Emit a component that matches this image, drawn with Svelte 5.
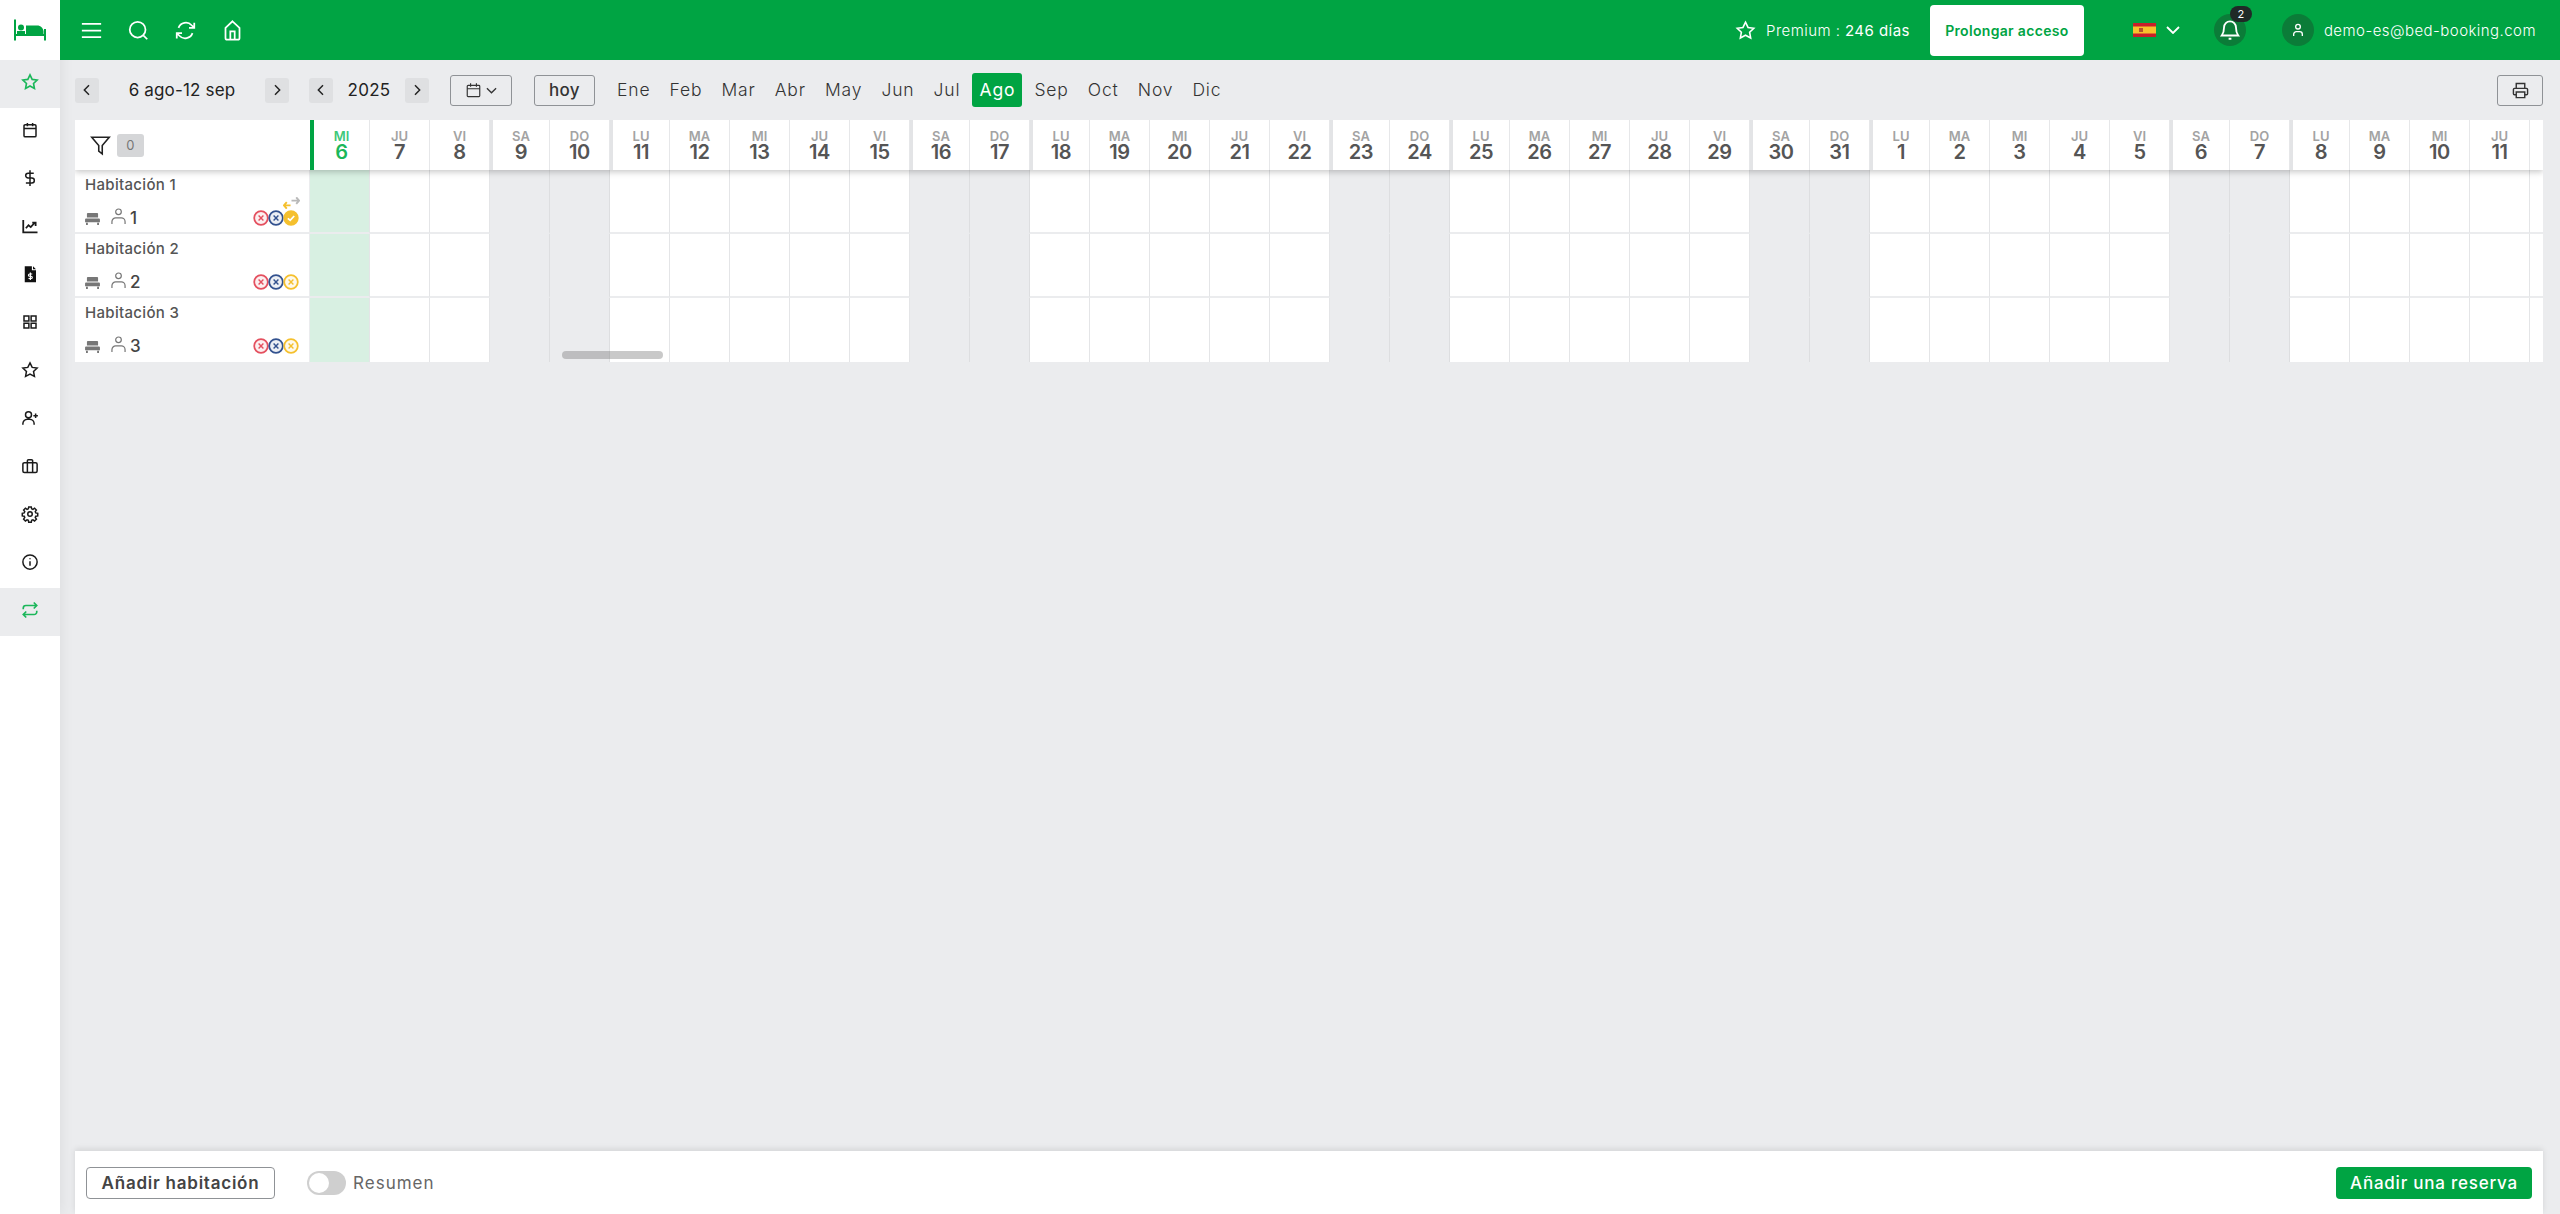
<script>
    const navIcons = [
        { d: "M12 2.5l2.9 6 6.6.9-4.8 4.6 1.2 6.5-5.900-3.100-5.900 3.100 1.200-6.500L2.500 9.400l6.600-.9z", active: true },
        { d: "M5.500 5h13a1.500 1.500 0 0 1 1.500 1.500v13a1.500 1.500 0 0 1-1.500 1.500h-13A1.500 1.500 0 0 1 4 19.500v-13A1.500 1.500 0 0 1 5.500 5zM4 10h16M8.500 2.500V7M15.500 2.500V7" },
        { d: "M12 1.500v21M17 5.500H9.500a3.200 3.200 0 0 0 0 6.500h5a3.200 3.200 0 0 1 0 6.500H6.500" },
        { d: "M3 4v16.500h19M6.500 15l3.500-4 3 2.500 5-5.500M15 7.500h4.500V12", heavy: true },
        { d: "doc" },
        { d: "M4 4h6.500v6.500H4zM13.500 4H20v6.500h-6.500zM4 13.500h6.500V20H4zM13.500 13.500H20V20h-6.500z" },
        { d: "M12 2.500l2.900 6 6.600.9-4.800 4.600 1.200 6.500-5.900-3.100-5.900 3.100 1.200-6.500L2.500 9.400l6.600-.9z" },
        { d: "M10 3.500a4 4 0 1 1 0 8 4 4 0 0 1 0-8zM2.500 21v-1.500a6 6 0 0 1 6-6h3a6 6 0 0 1 6 6V21M19.500 6v6M16.500 9h6" },
        { d: "M4.500 7.500h15A2 2 0 0 1 21.500 9.500v9a2 2 0 0 1-2 2h-15a2 2 0 0 1-2-2v-9a2 2 0 0 1 2-2zM8.500 7.500V5a1.500 1.500 0 0 1 1.500-1.500h4A1.500 1.500 0 0 1 15.500 5v2.500M8.500 7.500v13M15.500 7.500v13" },
        { d: "M12 9a3 3 0 1 1 0 6 3 3 0 0 1 0-6zM10.300 2.500h3.400l.5 2.600 1.700.7 2.200-1.500 2.400 2.400-1.500 2.200.7 1.700 2.600.5v3.400l-2.600.5-.7 1.700 1.500 2.200-2.400 2.400-2.200-1.500-1.700.7-.5 2.600h-3.400l-.5-2.600-1.700-.7-2.200 1.500-2.400-2.400 1.500-2.200-.7-1.700-2.600-.5v-3.400l2.600-.5.7-1.700-1.500-2.200 2.400-2.400 2.200 1.500 1.700-.7z" },
        { d: "M12 2.500a9.500 9.500 0 1 1 0 19 9.500 9.500 0 0 1 0-19zM12 11v6M12 7v1.200" },
        { d: "M17 2l4 4-4 4M3 11V9.500A3.500 3.500 0 0 1 6.500 6H21M7 22l-4-4 4-4M21 13v1.500a3.500 3.500 0 0 1-3.500 3.500H3", active: true },
    ];

    const months = ["Ene", "Feb", "Mar", "Abr", "May", "Jun", "Jul", "Ago", "Sep", "Oct", "Nov", "Dic"];
    const names = ["DO", "LU", "MA", "MI", "JU", "VI", "SA"];

    const days = Array.from({ length: 37 }, (_, i) => {
        const date = new Date(2025, 7, 6 + i);
        const dow = date.getDay();
        return {
            name: names[dow],
            num: date.getDate(),
            weekend: dow === 0 || dow === 6,
            today: i === 0,
            edge: dow === 1 || dow === 6,
        };
    });

    const rooms = [
        { name: "Habitación 1", num: 1, clean: true },
        { name: "Habitación 2", num: 2, clean: false },
        { name: "Habitación 3", num: 3, clean: false },
    ];
</script>

{#snippet chevron(d)}
    <svg class="chev" viewBox="0 0 24 24"><path d={d} /></svg>
{/snippet}

{#snippet status(color, check)}
    <svg class="status" viewBox="0 0 20 20">
        <circle cx="10" cy="10" r="8.500" fill={check ? color : color + "18"} stroke={color} stroke-width="2.200" />
        {#if check}
            <path d="M6 10.500l3 2.500 5-5.500" fill="none" stroke="#fff" stroke-width="2.200" />
        {:else}
            <path d="M7 7l6 6M13 7l-6 6" fill="none" stroke={color} stroke-width="1.800" />
        {/if}
    </svg>
{/snippet}

<div class="app">
    <nav class="sidebar">
        <div class="logo">
            <svg width="32" height="22" viewBox="0 0 32 22">
                <path d="M1 0.500v21M31 10v11.500M1 16h30" fill="none" stroke="#00a443" stroke-width="2" />
                <circle cx="7" cy="8.500" r="3" fill="#00a443" />
                <path d="M3 12h8v3H3zM12 6.500h11c4 0 6 2.500 6.500 5.500v3H12z" fill="#00a443" />
            </svg>
        </div>
        {#each navIcons as icon}
            <div class="nav-item" class:active={icon.active}>
                {#if icon.d === "doc"}
                    <svg class="nav-icon" viewBox="0 0 24 24">
                        <path class="doc" d="M5 1.500h9.500v5.500H20v16H5zM16 1.500l4 4h-4z" />
                        <path class="doc-mark" d="M12.500 10v10M15 12h-3.500a1.500 1.500 0 0 0 0 3h2a1.500 1.500 0 0 1 0 3H10" />
                    </svg>
                {:else}
                    <svg class="nav-icon" class:heavy={icon.heavy} viewBox="0 0 24 24"><path d={icon.d} /></svg>
                {/if}
            </div>
        {/each}
    </nav>

    <div class="main">
        <header class="topbar">
            <div class="top-left">
                <svg class="top-icon" viewBox="0 0 24 24"><path d="M1 4.500h22M1 12h22M1 19.500h22" /></svg>
                <svg class="top-icon" viewBox="0 0 24 24"><path d="M11 2a9 9 0 1 1 0 18 9 9 0 0 1 0-18zM17.500 17.500L22 22" /></svg>
                <svg class="top-icon" viewBox="0 0 24 24"><path d="M22 3v6h-6M2 21v-6h6M4 9a9 9 0 0 1 15-3l3 3M20 15a9 9 0 0 1-15 3l-3-3" /></svg>
                <svg class="top-icon" viewBox="0 0 24 24"><path d="M12 1.500l8 7.500v11.500a2 2 0 0 1-2 2H6a2 2 0 0 1-2-2V9zM9.500 22.500V13h5v9.500" /></svg>
            </div>
            <div class="top-right">
                <svg class="plan-star" viewBox="0 0 24 24"><path d="M12 2.500l2.900 6 6.600.9-4.800 4.600 1.200 6.500-5.900-3.100-5.900 3.100 1.200-6.500L2.500 9.400l6.600-.9z" /></svg>
                <span class="plan">Premium : <b>246 días</b></span>
                <button class="extend">Prolongar acceso</button>
                <svg class="flag" viewBox="0 0 23 14">
                    <rect width="23" height="14" fill="#c8202a" />
                    <rect y="3.500" width="23" height="7" fill="#f7c22d" />
                    <rect x="6" y="5" width="4" height="4" fill="#b5532a" />
                </svg>
                <svg class="lang-chev" viewBox="0 0 14 8"><path d="M1 1l6 6 6-6" /></svg>
                <div class="round bell">
                    <svg viewBox="0 0 24 24"><path d="M12 2.500a6.500 6.500 0 0 1 6.500 6.500c0 5 1 7 2.500 9H3c1.500-2 2.500-4 2.500-9A6.500 6.500 0 0 1 12 2.500zM10.500 21.500h3" /></svg>
                    <span class="badge">2</span>
                </div>
                <div class="round user">
                    <svg viewBox="0 0 24 24"><path d="M12 3.500a3.500 3.500 0 1 1 0 7 3.500 3.500 0 0 1 0-7zM5.500 21v-2.500a4 4 0 0 1 4-4h5a4 4 0 0 1 4 4V21" /></svg>
                </div>
                <span class="email">demo-es@bed-booking.com</span>
            </div>
        </header>

        <div class="content">
            <div class="toolbar">
                <button class="step">{@render chevron("M15 5l-7 7 7 7")}</button>
                <span class="range">6 ago-12 sep</span>
                <button class="step">{@render chevron("M9 5l7 7-7 7")}</button>
                <button class="step year-prev">{@render chevron("M15 5l-7 7 7 7")}</button>
                <span class="year">2025</span>
                <button class="step">{@render chevron("M9 5l7 7-7 7")}</button>
                <button class="outline cal">
                    <svg class="cal-icon" viewBox="0 0 18 18"><path d="M2.500 3.500h13a1 1 0 0 1 1 1v11.500a1 1 0 0 1-1 1h-13a1 1 0 0 1-1-1V4.500a1 1 0 0 1 1-1zM1.500 7.500h15M5.500 1v4M12.500 1v4" /></svg>
                    <svg class="cal-chev" viewBox="0 0 12 7"><path d="M1 1l5 5 5-5" /></svg>
                </button>
                <button class="outline hoy">hoy</button>
                <div class="months">
                    {#each months as m}
                        <span class="month" class:current={m === "Ago"}>{m}</span>
                    {/each}
                </div>
                <button class="outline print">
                    <svg viewBox="0 0 24 24"><path d="M6 9V2h12v7M6 18H3.500A1.500 1.500 0 0 1 2 16.500v-6A1.500 1.500 0 0 1 3.500 9h17a1.500 1.500 0 0 1 1.500 1.500v6a1.500 1.500 0 0 1-1.500 1.500H18M6 14h12v8H6z" /></svg>
                </button>
            </div>

            <div class="board">
                <div class="board-head">
                    <div class="filter">
                        <svg viewBox="0 0 24 24"><path d="M2 2.500h20l-8 9.500v9.500l-4-3V12z" /></svg>
                        <span class="count">0</span>
                    </div>
                    {#each days as day}
                        <div class="day" class:today={day.today} class:edge={day.edge}>
                            <span class="day-name">{day.name}</span>
                            <span class="day-num">{day.num}</span>
                        </div>
                    {/each}
                    <div class="day"></div>
                </div>

                {#each rooms as room, r}
                    <div class="row" class:last={r === rooms.length - 1}>
                        <div class="room">
                            <div class="room-name">{room.name}</div>
                            <div class="room-info">
                                <svg class="bed" viewBox="0 0 16 14"><path d="M3 1h10a1 1 0 0 1 1 1v4H2V2a1 1 0 0 1 1-1zM1 7h14a1 1 0 0 1 1 1v3H0V8a1 1 0 0 1 1-1zM1 11.500h2V14H1zM13 11.500h2V14h-2z" /></svg>
                                <svg class="person" viewBox="0 0 16 18"><path d="M8 1a3 3 0 1 1 0 6 3 3 0 0 1 0-6zM1 17v-2.500a4 4 0 0 1 4-4h6a4 4 0 0 1 4 4V17" /></svg>
                                <span class="capacity">{room.num}</span>
                                <div class="states">
                                    {#if room.clean}
                                        <svg class="swap" viewBox="0 0 18 12">
                                            <path d="M8 8.500H1M4 5l-3 3.500L4 12" fill="none" stroke="#f5c02e" stroke-width="2" />
                                            <path d="M9 3.500h8M14 0l3 3.500L14 7" fill="none" stroke="#b9b9b9" stroke-width="2" />
                                        </svg>
                                    {/if}
                                    {@render status("#e4505f", false)}
                                    {@render status("#33528f", false)}
                                    {@render status("#f5c02e", room.clean)}
                                </div>
                            </div>
                        </div>
                        {#each days as day}
                            <div class="cell" class:weekend={day.weekend} class:today={day.today}></div>
                        {/each}
                        <div class="cell"></div>
                    </div>
                {/each}
                <div class="thumb"></div>
            </div>

            <div class="spacer"></div>

            <footer class="bottom">
                <button class="outline add-room">Añadir habitación</button>
                <span class="toggle"><span class="knob"></span></span>
                <span class="toggle-label">Resumen</span>
                <button class="add-booking">Añadir una reserva</button>
            </footer>
        </div>
    </div>
</div>

<style>
    :global(body) {
        margin: 0;
        background: #ebecee;
    }

    .app {
        display: flex;
        height: 1214px;
        overflow: hidden;
        font-family: Inter, "Liberation Sans", sans-serif;
        letter-spacing: 0.02em;
        color: #333;
    }

    button {
        font-family: inherit;
        letter-spacing: inherit;
        cursor: pointer;
    }

    /* sidebar */
    .sidebar {
        position: relative;
        z-index: 1;
        flex: 0 0 60px;
        background: #fff;
        box-shadow: 0 0 14px rgba(0, 0, 0, 0.08);
    }
    .logo {
        height: 60px;
        display: flex;
        align-items: center;
        justify-content: center;
    }
    .nav-item {
        height: 48px;
        box-sizing: border-box;
        padding-bottom: 4px;
        display: flex;
        align-items: center;
        justify-content: center;
    }
    .nav-item.active {
        background: #ebecee;
    }
    .nav-icon {
        width: 18px;
        height: 18px;
        fill: none;
        stroke: #1b1b1b;
        stroke-width: 2;
    }
    .nav-icon.heavy {
        stroke-width: 2.4;
    }
    .nav-item.active .nav-icon {
        stroke: #1bb75a;
        stroke-width: 2.2;
    }
    .doc {
        fill: #111;
        stroke: none;
    }
    .doc-mark {
        stroke: #fff;
        stroke-width: 1.6;
    }

    .main {
        position: relative;
        z-index: 2;
        flex: 1;
        min-width: 0;
        display: flex;
        flex-direction: column;
    }

    /* top bar */
    .topbar {
        flex: 0 0 60px;
        background: #00a443;
        display: flex;
        align-items: center;
        justify-content: space-between;
        padding-left: 21px;
        padding-right: 24px;
        color: #fff;
    }
    .top-left {
        display: flex;
        align-items: center;
        gap: 26px;
    }
    .top-icon {
        width: 21px;
        height: 21px;
        fill: none;
        stroke: #fff;
        stroke-width: 2;
    }
    .top-right {
        display: flex;
        align-items: center;
    }
    .plan-star {
        width: 21px;
        height: 21px;
        fill: none;
        stroke: #fff;
        stroke-width: 1.800;
        margin-right: 10px;
    }
    .plan {
        font-size: 15px;
        font-weight: 300;
        letter-spacing: 0.03em;
        white-space: nowrap;
    }
    .plan b {
        font-weight: 400;
    }
    .extend {
        height: 51px;
        width: 154px;
        margin-left: 20px;
        border: none;
        border-radius: 4px;
        background: #fff;
        color: #00a443;
        font-size: 14px;
        font-weight: 600;
    }
    .flag {
        width: 23px;
        height: 14px;
        margin-left: 49px;
    }
    .lang-chev {
        width: 14px;
        height: 8px;
        margin-left: 10px;
        fill: none;
        stroke: #fff;
        stroke-width: 1.800;
    }
    .round {
        position: relative;
        width: 32px;
        height: 32px;
        border-radius: 50%;
        background: #0b7c38;
        display: flex;
        align-items: center;
        justify-content: center;
    }
    .round svg {
        fill: none;
        stroke: #fff;
        stroke-width: 2;
    }
    .bell {
        margin-left: 34px;
    }
    .bell svg {
        width: 22px;
        height: 22px;
    }
    .badge {
        position: absolute;
        top: -8px;
        right: -6px;
        width: 22px;
        height: 16px;
        border-radius: 8px;
        background: #1f2a27;
        font-size: 11px;
        line-height: 16px;
        text-align: center;
    }
    .user {
        margin-left: 36px;
    }
    .user svg {
        width: 16px;
        height: 16px;
    }
    .email {
        margin-left: 10px;
        font-size: 15px;
        font-weight: 300;
        letter-spacing: 0.03em;
        white-space: nowrap;
    }

    /* page content */
    .content {
        flex: 1;
        min-height: 0;
        display: flex;
        flex-direction: column;
        padding: 0 17px 0 15px;
    }
    .toolbar {
        flex: 0 0 60px;
        display: flex;
        align-items: center;
    }
    .step {
        width: 24px;
        height: 25px;
        padding: 0;
        border: none;
        border-radius: 3px;
        background: #dfe0e2;
        display: flex;
        align-items: center;
        justify-content: center;
    }
    .chev {
        width: 16px;
        height: 16px;
        fill: none;
        stroke: #222;
        stroke-width: 2.200;
    }
    .range {
        width: 166px;
        text-align: center;
        font-size: 17px;
        letter-spacing: 0.01em;
        color: #222;
        white-space: nowrap;
    }
    .year-prev {
        margin-left: 20px;
    }
    .year {
        width: 72px;
        text-align: center;
        font-size: 17px;
        color: #222;
    }
    .outline {
        background: transparent;
        border: 1px solid #8f9296;
        border-radius: 3px;
    }
    .cal {
        width: 62px;
        height: 31px;
        margin-left: 21px;
        padding: 0;
        display: flex;
        align-items: center;
        justify-content: center;
        gap: 5px;
    }
    .cal-icon {
        width: 15px;
        height: 16px;
        fill: none;
        stroke: #333;
        stroke-width: 1.400;
    }
    .cal-chev {
        width: 11px;
        height: 7px;
        fill: none;
        stroke: #333;
        stroke-width: 1.400;
    }
    .hoy {
        width: 61px;
        height: 31px;
        margin-left: 22px;
        padding: 0;
        font-size: 17px;
        font-weight: 500;
        color: #333;
    }
    .months {
        display: flex;
        align-items: center;
        gap: 5px;
        margin-left: 15px;
    }
    .month {
        height: 34px;
        padding: 0 7px;
        border-radius: 3px;
        font-size: 17.500px;
        font-weight: 300;
        letter-spacing: 0.05em;
        line-height: 34px;
        color: #333;
    }
    .month.current {
        background: #00a443;
        color: #fff;
        font-weight: 400;
    }
    .print {
        width: 46px;
        height: 31px;
        margin-left: auto;
        padding: 0;
        display: flex;
        align-items: center;
        justify-content: center;
    }
    .print svg {
        width: 17px;
        height: 17px;
        fill: none;
        stroke: #333;
        stroke-width: 2;
    }

    /* booking board */
    .board {
        position: relative;
        overflow: hidden;
    }
    .board-head {
        position: relative;
        z-index: 1;
        display: flex;
        height: 50px;
        box-shadow: 0 2px 6px rgba(0, 0, 0, 0.22);
    }
    .filter {
        flex: 0 0 235px;
        box-sizing: border-box;
        background: #fff;
        display: flex;
        align-items: center;
        padding-left: 15px;
    }
    .filter svg {
        width: 21px;
        height: 21px;
        fill: none;
        stroke: #222;
        stroke-width: 1.800;
    }
    .count {
        width: 27px;
        height: 23px;
        margin-left: 6px;
        border-radius: 3px;
        background: #d5d6d8;
        color: #777;
        font-size: 13px;
        line-height: 23px;
        text-align: center;
    }
    .day {
        flex: 0 0 60px;
        box-sizing: border-box;
        background: #fff;
        border-right: 1px solid #e6e7e9;
        display: flex;
        flex-direction: column;
        align-items: center;
        justify-content: center;
        padding-top: 1px;
    }
    .day.edge {
        border-left: 3px solid #e3e4e6;
    }
    .day.today {
        border-left: 4px solid #00a443;
    }
    .day-name {
        font-size: 13px;
        font-weight: 600;
        line-height: 14px;
        letter-spacing: 0;
        color: #a3a3a3;
    }
    .day-num {
        font-size: 20px;
        font-weight: 600;
        line-height: 19px;
        letter-spacing: -0.02em;
        color: #555;
    }
    .today .day-name {
        color: #3ec878;
    }
    .today .day-num {
        color: #1bb75a;
    }
    .row {
        display: flex;
        height: 64px;
    }
    .room {
        flex: 0 0 234px;
        margin-right: 1px;
        box-sizing: border-box;
        padding: 5px 10px 0 10px;
        background: #fff;
        border-bottom: 2px solid #ebecee;
    }
    .room-name {
        font-size: 15px;
        font-weight: 500;
        line-height: 20px;
        color: #555;
    }
    .room-info {
        display: flex;
        align-items: center;
        height: 22px;
        margin-top: 12px;
    }
    .bed {
        width: 15px;
        height: 13px;
        fill: #777;
    }
    .person {
        width: 15px;
        height: 17px;
        margin-left: 11px;
        fill: none;
        stroke: #777;
        stroke-width: 1.300;
        margin-top: -3px;
    }
    .capacity {
        margin-left: 4px;
        font-size: 17px;
        font-weight: 500;
        color: #444;
    }
    .states {
        position: relative;
        margin-left: auto;
        display: flex;
        align-items: center;
    }
    .status {
        width: 16px;
        height: 16px;
        margin-left: -1px;
    }
    .swap {
        position: absolute;
        top: -13px;
        right: -1px;
        width: 17px;
        height: 12px;
    }
    .cell {
        flex: 0 0 60px;
        box-sizing: border-box;
        background: #fff;
        border-right: 1px solid #e4e5e7;
        border-bottom: 2px solid #ebecee;
    }
    .cell.weekend {
        background: transparent;
        border-right-color: #dddee0;
    }
    .cell.today {
        background: #d8f0e2;
    }
    .last .room,
    .last .cell {
        border-bottom: none;
    }
    .thumb {
        position: absolute;
        left: 487px;
        top: 231px;
        width: 101px;
        height: 8px;
        border-radius: 4px;
        background: rgba(120, 120, 120, 0.4);
    }
    .spacer {
        flex: 1;
    }

    /* bottom bar */
    .bottom {
        flex: 0 0 63px;
        display: flex;
        align-items: center;
        padding: 0 11px;
        background: #fff;
        box-shadow: 0 -2px 6px rgba(0, 0, 0, 0.1);
    }
    .add-room {
        width: 189px;
        height: 32px;
        padding: 0;
        border-radius: 4px;
        background: #fff;
        font-size: 17px;
        font-weight: 600;
        letter-spacing: 0.045em;
        color: #444;
    }
    .toggle {
        width: 39px;
        height: 24px;
        margin-left: 32px;
        border-radius: 12px;
        background: #cfcfcf;
        display: flex;
        align-items: center;
        padding-left: 2px;
        box-sizing: border-box;
    }
    .knob {
        width: 20px;
        height: 20px;
        border-radius: 50%;
        background: #fff;
    }
    .toggle-label {
        margin-left: 7px;
        font-size: 17px;
        font-weight: 400;
        letter-spacing: 0.06em;
        color: #666;
    }
    .add-booking {
        width: 196px;
        height: 32px;
        margin-left: auto;
        padding: 0;
        border: none;
        border-radius: 4px;
        background: #00a443;
        color: #fff;
        font-size: 17px;
        font-weight: 500;
        letter-spacing: 0.045em;
    }
</style>
